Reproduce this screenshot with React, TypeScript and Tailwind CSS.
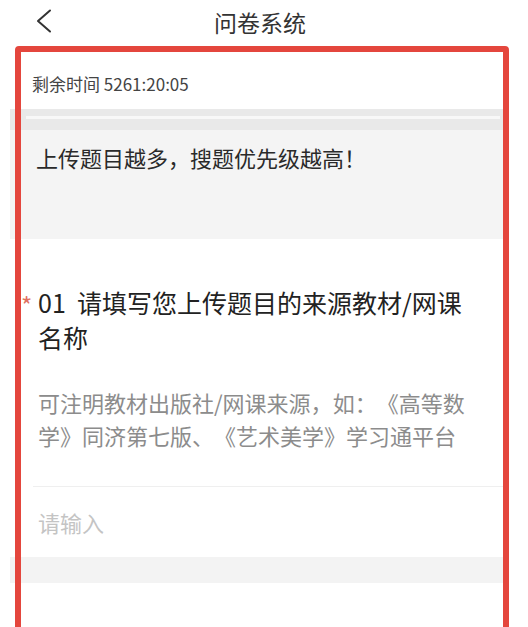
import React from "react";

export default function App() {
  return (
    <div
      className="relative w-[528px] h-[627px] overflow-hidden bg-white text-[#333] [text-spacing-trim:space-all]"
      style={{ fontFamily: '"Noto Sans CJK SC", "Noto Sans", sans-serif' }}
    >
      {/* header */}
      <div className="relative h-[46px] flex items-center justify-center">
        <svg
          className="absolute left-[34px] top-[8px]"
          width="20"
          height="26"
          viewBox="0 0 20 26"
          fill="none"
        >
          <path d="M16 2.5 L4 13 L16 23.5" stroke="#333" strokeWidth="2" strokeLinecap="round" strokeLinejoin="round" />
        </svg>
        <div className="text-[23px] leading-[30px] text-[#333] -mt-[2px] -ml-[8px]">问卷系统</div>
      </div>

      {/* page content */}
      <div className="ml-[10px] w-[496px]">
        <div className="h-[63px] bg-white pt-[29px] pl-[22px]">
          <div className="text-[17px] leading-[18px] text-[#444]">剩余时间 5261:20:05</div>
        </div>
        <div className="h-[21px] bg-[#e9e9e9] pt-[7px] pl-[16px]">
          <div className="h-[3px] w-[474px] bg-[#f8f8f8]" />
        </div>
        <div className="h-[109px] bg-[#f4f4f4] pt-[12px] pl-[26px]">
          <div className="text-[22px] leading-[30px] text-[#2a2a2a]">上传题目越多，搜题优先级越高！</div>
        </div>

        <div className="h-[318px] bg-white pt-[46px]">
          <div className="relative pl-[28px] pr-[20px]">
            <span className="absolute left-[11px] top-[8px] text-[24px] leading-[24px] text-[#e0705f]">*</span>
            <div className="text-[25px] leading-[35px] text-[#222]">
              01&nbsp; 请填写您上传题目的来源教材/网课
              <br />
              名称
            </div>
            <div className="mt-[31px] text-[22px] leading-[33px] text-[#8c8c8c]">
              可注明教材出版社/网课来源，如：《高等数
              <br />
              学》同济第七版、《艺术美学》学习通平台
            </div>
          </div>
          <div className="mt-[34px] ml-[23px] h-px bg-[#efefef]" />
          <div className="pt-[20px] pl-[28px] text-[22px] leading-[30px] text-[#c4c4c4]">请输入</div>
        </div>

        <div className="h-[26px] bg-[#f3f3f3]" />
        <div className="h-[60px] bg-white" />
      </div>

      {/* red highlight box */}
      <div className="absolute left-[15px] top-[46px] w-[494px] h-[620px] rounded-[4px] border-[6px] border-[#e4463d]" />
    </div>
  );
}
